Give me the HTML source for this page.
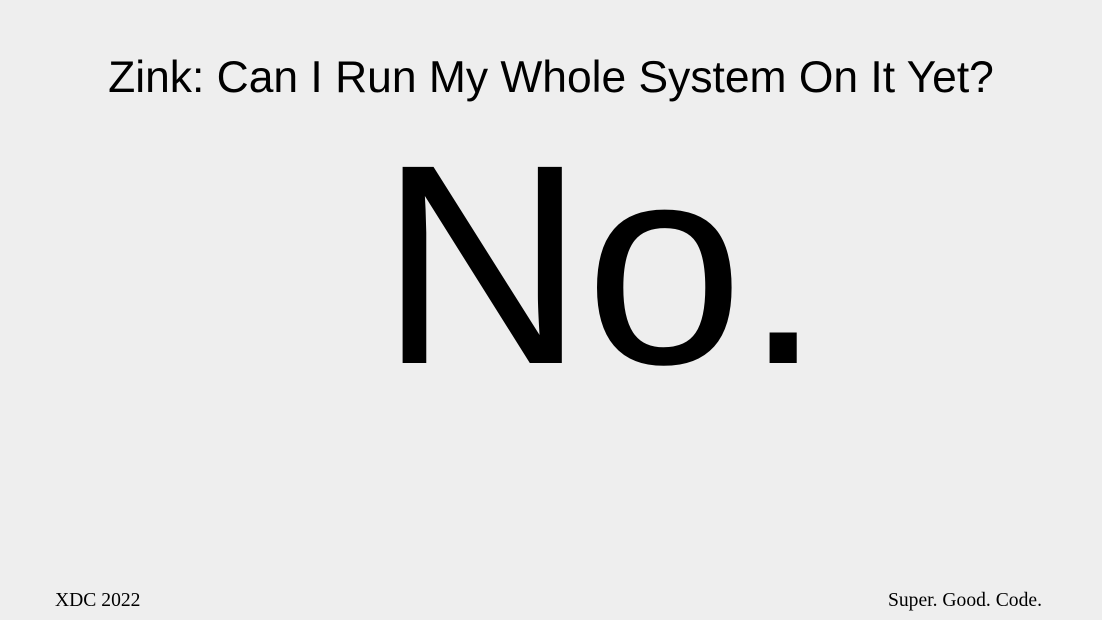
<!DOCTYPE html>
<html><head><style>
html,body{margin:0;padding:0;}
body{width:1102px;height:620px;background:#eeeeee;position:relative;overflow:hidden;color:#000;}
div{position:absolute;white-space:nowrap;line-height:1;}
.t{left:0;width:1102px;text-align:center;top:53px;font:44.4px "Liberation Sans",sans-serif;}
.n{left:0;width:1202px;text-align:center;top:102px;font:285px "Liberation Sans",sans-serif;}
.f{top:590px;font:19.6px "Liberation Serif",serif;}
</style></head><body>
<div class="t">Zink: Can I Run My Whole System On It Yet?</div>
<div class="n">No.</div>
<div class="f" style="left:55px">XDC 2022</div>
<div class="f" style="right:60px">Super. Good. Code.</div>
</body></html>
